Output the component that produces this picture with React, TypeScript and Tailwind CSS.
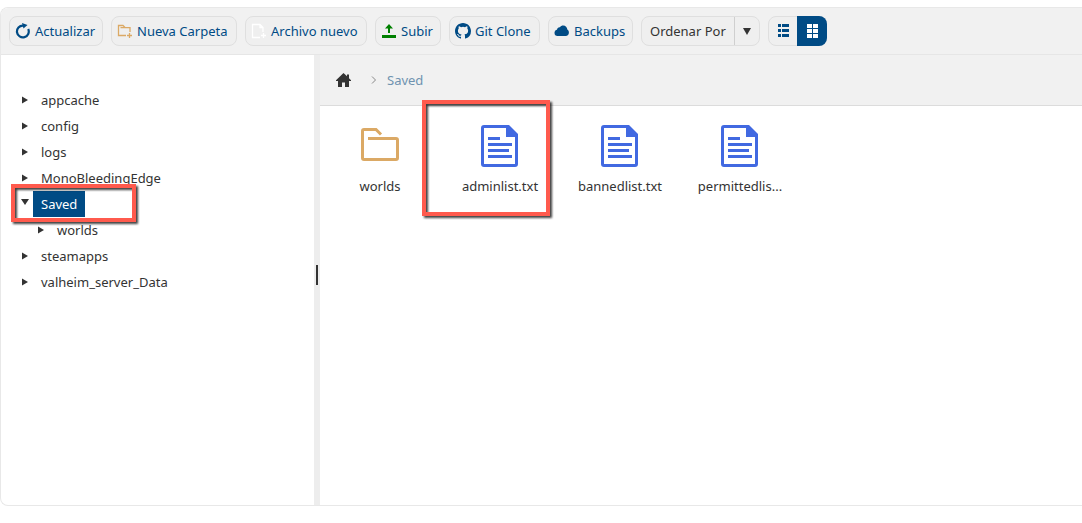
import { useState } from 'react'
import type { ReactNode } from 'react'

type Node = { name: string; depth: number; open?: boolean }

const TREE: Node[] = [
  { name: 'appcache', depth: 0 },
  { name: 'config', depth: 0 },
  { name: 'logs', depth: 0 },
  { name: 'MonoBleedingEdge', depth: 0 },
  { name: 'Saved', depth: 0, open: true },
  { name: 'worlds', depth: 1 },
  { name: 'steamapps', depth: 0 },
  { name: 'valheim_server_Data', depth: 0 },
]

const FILES = [
  { name: 'worlds', label: 'worlds', folder: true },
  { name: 'adminlist.txt', label: 'adminlist.txt', marked: true },
  { name: 'bannedlist.txt', label: 'bannedlist.txt' },
  { name: 'permittedlist.txt', label: 'permittedlis...' },
]

function RefreshIcon() {
  return (
    <svg width="16" height="16" viewBox="0 0 16 16" fill="none" className="shrink-0">
      <path d="M8 2.6A5.900 5.900 0 1 0 13.200 6" stroke="#004b85" strokeWidth="2.200" />
      <path d="M7 0l5.500 2L8.500 5.500z" fill="#004b85" />
    </svg>
  )
}

function NewFolderIcon() {
  return (
    <svg width="16" height="16" viewBox="0 0 16 16" fill="none" stroke="#dba965" strokeWidth="1.3" className="shrink-0">
      <path d="M9 12.5H1.500v-10H6l2 2M3.500 4.600h9.500V9" />
      <path d="M12.500 10v5M10 12.500h5" />
    </svg>
  )
}

function NewFileIcon() {
  return (
    <svg width="16" height="16" viewBox="0 0 16 16" fill="none" stroke="#fff" strokeWidth="1.3" className="shrink-0">
      <path d="M9 14.500H1.500v-13H9l3 3V9M9 1.500v3h3" />
      <path d="M12.500 10v5M10 12.500h5" />
    </svg>
  )
}

function UploadIcon() {
  return (
    <svg width="16" height="16" viewBox="0 0 16 16" fill="#008000" className="shrink-0">
      <path d="M8 1l4 4.500H9V10H7V5.500H4zM1 12h14v3H1z" />
    </svg>
  )
}

function GithubIcon() {
  return (
    <svg width="16" height="16" viewBox="0 0 16 16" fill="#004b85" className="shrink-0">
      <path d="M8 0C3.58 0 0 3.58 0 8c0 3.54 2.29 6.53 5.47 7.59.4.07.55-.17.55-.38 0-.19-.01-.82-.01-1.49-2.01.37-2.53-.49-2.69-.94-.09-.23-.48-.94-.82-1.13-.28-.15-.68-.52-.01-.53.63-.01 1.08.58 1.23.82.72 1.21 1.87.87 2.33.66.07-.52.28-.87.51-1.07-1.78-.2-3.64-.89-3.64-3.95 0-.87.31-1.59.82-2.15-.08-.2-.36-1.02.08-2.12 0 0 .67-.21 2.2.82a7.5 7.5 0 0 1 4 0c1.53-1.04 2.2-.82 2.2-.82.44 1.1.16 1.92.08 2.12.51.56.82 1.27.82 2.15 0 3.07-1.87 3.75-3.65 3.95.29.25.54.73.54 1.48 0 1.07-.01 1.93-.01 2.2 0 .21.15.46.55.38A8 8 0 0 0 16 8c0-4.42-3.58-8-8-8z" />
    </svg>
  )
}

function CloudIcon() {
  return (
    <svg width="16" height="16" viewBox="0 0 16 16" fill="#004b85" className="shrink-0">
      <path d="M3.800 13A3.200 3.200 0 0 1 .5 9.800c0-1.700 1-2.900 2.500-3.100C3.200 5 4.500 4 5.800 4.200 6.700 3 7.900 2.500 9.200 2.500c2.300 0 4 1.700 4.100 4 1 .6 1.600 1.700 1.600 3.100 0 2-1.300 3.400-3.200 3.400z" />
    </svg>
  )
}

function ListIcon() {
  return (
    <svg width="12" height="14" viewBox="-1 0 12 14" fill="#004b85" shapeRendering="crispEdges">
      <path d="M0 0h3v3H0zM0 5h3v3H0zM0 10h3v3H0zM4 0h7v3H4zM4 5h7v3H4zM4 10h7v3H4z" />
    </svg>
  )
}

function GridIcon() {
  return (
    <svg width="12" height="14" viewBox="-1 0 12 14" fill="#fff" shapeRendering="crispEdges">
      <path d="M0 0h5v4H0zM6 0h5v4H6zM0 5h5v4H0zM6 5h5v4H6zM0 10h5v4H0zM6 10h5v4H6z" />
    </svg>
  )
}

function FolderIcon() {
  return (
    <svg width="38" height="42" viewBox="1 0 38 42" fill="none" stroke="#dba965" strokeWidth="3">
      <path d="M21 9.500 16 4.500H4A1.500 1.500 0 0 0 2.500 6v27A1.500 1.500 0 0 0 4 34.500h32a1.500 1.500 0 0 0 1.500-1.500V15a1.500 1.500 0 0 0-1.500-1.500H8" />
    </svg>
  )
}

function FileIcon() {
  return (
    <svg width="38" height="42" viewBox="1 0 38 42" fill="none" stroke="#4169e1" strokeWidth="3">
      <path d="M4 1.500h23.500l9 9V39a1.500 1.500 0 0 1-1.500 1.500H4A1.500 1.500 0 0 1 2.500 39V3A1.500 1.500 0 0 1 4 1.500z" />
      <path d="M26 0h3l9 9v3H26z" fill="#4169e1" stroke="none" />
      <path d="M8 13.500h12M8 19.500h24M8 25.500h21M8 31.500h24" />
    </svg>
  )
}

function ToolButton({ icon, width, children }: { icon: ReactNode; width: string; children: ReactNode }) {
  return (
    <button className={`flex h-[30px] items-center gap-1 rounded-lg border border-[#dfdfdf] bg-[#efefef] pl-[5px] text-[#004b85] hover:bg-[#e6e6e6] ${width}`}>
      {icon}
      <span>{children}</span>
    </button>
  )
}

export default function App() {
  const [selected, setSelected] = useState('Saved')
  const [view, setView] = useState('grid')

  return (
    <div className="min-h-screen bg-white pt-[7px] pb-[17px] font-['Noto_Sans','Open_Sans',sans-serif] text-[13px] leading-5 text-[#333]">
      <div className="flex min-h-[calc(100vh-24px)] flex-col overflow-hidden rounded-l-lg border border-r-0 border-[#e8e8e8]">
        <header className="flex gap-2 border-b border-[#e6e6e6] bg-[#f1f1f1] p-2">
          <ToolButton width="min-w-[94px]" icon={<RefreshIcon />}>Actualizar</ToolButton>
          <ToolButton width="min-w-[126px]" icon={<NewFolderIcon />}>Nueva Carpeta</ToolButton>
          <ToolButton width="min-w-[122px]" icon={<NewFileIcon />}>Archivo nuevo</ToolButton>
          <ToolButton width="min-w-[66px]" icon={<UploadIcon />}>Subir</ToolButton>
          <ToolButton width="min-w-[91px]" icon={<GithubIcon />}>Git Clone</ToolButton>
          <ToolButton width="min-w-[85px]" icon={<CloudIcon />}>Backups</ToolButton>
          <div className="flex h-[30px] overflow-hidden rounded-lg border border-[#dfdfdf] bg-[#efefef]">
            <button className="px-2">Ordenar Por</button>
            <button aria-label="Ordenar Por" className="flex w-[25px] items-center justify-center border-l border-[#cfcfcf]">
              <svg width="8" height="7" viewBox="0 0 8 7" fill="#333"><path d="M0 0h8L4 7z" /></svg>
            </button>
          </div>
          <div className="flex h-[30px] rounded-lg border border-[#dfdfdf] bg-[#efefef]">
            <button aria-label="Lista" onClick={() => setView('list')} className="flex w-7 items-center justify-center">
              <ListIcon />
            </button>
            <button aria-label="Cuadrícula" aria-pressed={view === 'grid'} onClick={() => setView('grid')} className="-my-px -mr-px flex w-[30px] items-center justify-center rounded-r-lg bg-[#004b85]">
              <GridIcon />
            </button>
          </div>
        </header>

        <div className="flex grow">
          <nav className="w-[313px] shrink-0 pt-8 pl-5">
            <ul>
              {TREE.map(node => (
                <li key={node.name + node.depth} className={`relative flex h-[26px] items-center ${node.depth ? 'pl-4' : ''}`}>
                  <svg width="8" height="10" viewBox="0 0 8 10" fill="#333" className="mr-1 shrink-0">
                    {node.open ? <path d="M0 0h8L4 6z" /> : <path d="M1 1.500l6 3.500-6 3.500z" />}
                  </svg>
                  <button
                    onClick={() => setSelected(node.name)}
                    className={`h-full px-2 ${selected === node.name && !node.depth ? 'bg-[#004b85] text-white' : ''}`}
                  >
                    {node.name}
                  </button>
                  {node.open ? (
                    <span className="pointer-events-none absolute -top-[7px] -left-[10px] z-10 h-[38px] w-[125px] border-4 border-[#ff5a4d] drop-shadow-[2px_2px_1px_rgba(0,0,0,0.75)]" />
                  ) : null}
                </li>
              ))}
            </ul>
          </nav>

          <div className="flex w-[6px] shrink-0 cursor-col-resize items-center justify-center bg-[#ededed] pb-[10px]">
            <div className="h-5 w-[2px] bg-[#333]" />
          </div>

          <main className="min-w-0 grow">
            <div className="flex h-[51px] items-center border-b border-[#dcdcdc] bg-[#f1f1f1] pl-4">
              <a href="#" aria-label="Inicio">
                <svg width="15" height="14" viewBox="0 0 15 14" fill="#333">
                  <path d="M7.500 0 11 3.300V1.500h2v3.700L15 7.200V8h-2v6H9V9.500H6V14H2V8H0v-.8z" />
                </svg>
              </a>
              <svg width="6" height="8" viewBox="0 0 6 8" fill="none" stroke="#888" className="mx-5 mr-[10px] shrink-0">
                <path d="M1 .5 4.500 4 1 7.500" />
              </svg>
              <a href="#" className="text-[#6f93b0]">Saved</a>
            </div>
            <div className="flex flex-wrap">
              {FILES.map(file => (
                <button key={file.name} title={file.name} className="relative flex h-[120px] w-[120px] flex-col items-center pt-[19px]">
                  {file.folder ? <FolderIcon /> : <FileIcon />}
                  <span className="mt-[9px]">{file.label}</span>
                  {file.marked ? (
                    <span className="pointer-events-none absolute -top-[6px] -left-[18px] h-[116px] w-[128px] border-4 border-[#ff5a4d] drop-shadow-[2px_2px_1px_rgba(0,0,0,0.75)]" />
                  ) : null}
                </button>
              ))}
            </div>
          </main>
        </div>
      </div>
    </div>
  )
}
